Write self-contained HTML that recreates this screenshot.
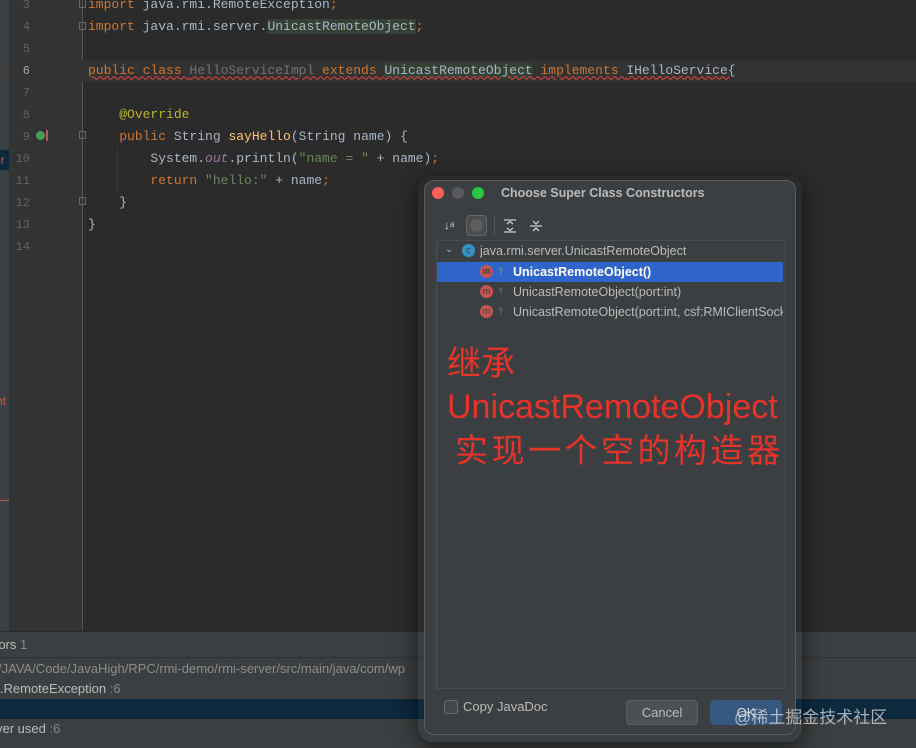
<!DOCTYPE html>
<html><head><meta charset="utf-8"><style>
*{margin:0;padding:0;box-sizing:border-box}
body{width:916px;height:748px;overflow:hidden;background:#2b2b2b;position:relative;font-family:"Liberation Sans","Noto Sans CJK SC",sans-serif}
.a{position:absolute}
.code{font-family:"Liberation Mono",monospace;font-size:13px;color:#a9b7c6;white-space:pre;line-height:22px}
.ln{font-family:"Liberation Mono",monospace;font-size:12px;color:#606366;line-height:22px;text-align:right;width:22px}
.k{color:#cc7832}.s{color:#6a8759}.an{color:#bbb529}.m{color:#ffc66d}.g{color:#72737a}.o{color:#9876aa;font-style:italic}
.hl{background:#344134}
.row{position:absolute;left:0;width:346px;height:20px;font-size:12.5px;color:#bbbbbb;line-height:20px;white-space:nowrap;overflow:hidden}
.mi{position:absolute;left:43px;top:3px;width:13px;height:13px;border-radius:50%;background:#c75450;color:#3c3f41;font-size:9px;line-height:13px;text-align:center}
.key{position:absolute;left:62px;top:5px;width:4px;height:8px;color:#888;font-size:9px;line-height:8px}
.bp{font-size:13px;color:#bbb;white-space:nowrap}
</style></head><body>
<div class="a" style="left:0;top:0;width:9px;height:631px;background:#3c3f41"></div>
<div class="a" style="left:9px;top:0;width:74px;height:631px;background:#313335"></div>
<div class="a" style="left:82px;top:0;width:1px;height:631px;background:#555"></div>
<div class="a" style="left:0;top:150px;width:9px;height:20px;background:#0d293e;color:#c75450;font-size:12px;line-height:20px;overflow:hidden"><span style="margin-left:-6px">er</span></div>
<div class="a" style="left:0;top:391px;width:9px;height:20px;color:#c75450;font-size:12px;line-height:20px;overflow:hidden"><span style="margin-left:-4px">nt</span></div>
<div class="a" style="left:0;top:500px;width:9px;height:1px;background:#c75450"></div>
<div class="a" style="left:83px;top:60px;width:833px;height:22px;background:#323232"></div>
<div class="a" style="left:9px;top:60px;width:74px;height:22px;background:#323232"></div>
<div class="a ln" style="left:8px;top:-6px">3<br>4<br>5<br><span style="color:#a4a3a3">6</span><br>7<br>8<br>9<br>10<br>11<br>12<br>13<br>14</div>
<div class="a" style="left:36px;top:131px;width:9px;height:9px;border-radius:50%;background:#499c54"></div>
<div class="a" style="left:46px;top:130px;width:2px;height:11px;background:#c75450"></div>
<div class="a" style="left:79px;top:0;width:7px;height:8px;border:1px solid #666;border-top:none"></div>
<div class="a" style="left:79px;top:22px;width:7px;height:8px;border:1px solid #666"></div>
<div class="a" style="left:79px;top:131px;width:7px;height:8px;border:1px solid #666"></div>
<div class="a" style="left:79px;top:197px;width:7px;height:8px;border:1px solid #666"></div>
<div class="a" style="left:117px;top:148px;width:1px;height:44px;background:#3b3b3b"></div>
<div class="a code" style="left:88px;top:-6px"><span class="k">import</span> java.rmi.RemoteException<span class="k">;</span>
<span class="k">import</span> java.rmi.server.<span class="hl">UnicastRemoteObject</span><span class="k">;</span>

<span class="k" style="text-decoration:underline wavy #bc3f3c">public class </span><span class="g" style="text-decoration:underline wavy #bc3f3c">HelloServiceImpl </span><span class="k" style="text-decoration:underline wavy #bc3f3c">extends </span><span class="hl" style="text-decoration:underline wavy #bc3f3c">UnicastRemoteObject</span><span class="k" style="text-decoration:underline wavy #bc3f3c"> implements </span><span style="text-decoration:underline wavy #bc3f3c">IHelloService{</span>

    <span class="an">@Override</span>
    <span class="k">public</span> String <span class="m">sayHello</span>(String name) {
        System.<span class="o">out</span>.println(<span class="s">"name = "</span> + name)<span class="k">;</span>
        <span class="k">return</span> <span class="s">"hello:"</span> + name<span class="k">;</span>
    }
}
</div>
<div class="a" style="left:0;top:631px;width:916px;height:117px;background:#3c3f41"></div>
<div class="a" style="left:0;top:631px;width:916px;height:1px;background:#2b2b2b"></div>
<div class="a bp" style="left:-6px;top:637px">rors <span style="color:#888">1</span></div>
<div class="a" style="left:0;top:657px;width:916px;height:1px;background:#323232"></div>
<div class="a bp" style="left:-2px;top:661px;color:#8c8c8c">/JAVA/Code/JavaHigh/RPC/rmi-demo/rmi-server/src/main/java/com/wp</div>
<div class="a bp" style="left:-3px;top:681px">i.RemoteException <span style="color:#888">:6</span></div>
<div class="a" style="left:0;top:699px;width:916px;height:20px;background:#0d293e"></div>
<div class="a bp" style="left:-4px;top:721px">ver used <span style="color:#888">:6</span></div>
<div class="a" style="left:418px;top:176px;width:384px;height:566px;border-radius:14px;box-shadow:0 6px 24px rgba(0,0,0,.6)"></div>
<div class="a" style="left:424px;top:180px;width:372px;height:555px;background:#3c3f41;border-radius:10px;border:1px solid #5a5c5e">
 <div class="a" style="left:7px;top:6px;width:12px;height:12px;border-radius:50%;background:#fe5f57"></div>
 <div class="a" style="left:27px;top:6px;width:12px;height:12px;border-radius:50%;background:#59595b"></div>
 <div class="a" style="left:47px;top:6px;width:12px;height:12px;border-radius:50%;background:#28c840"></div>
 <div class="a" style="left:76px;top:5px;font-size:12.5px;font-weight:bold;color:#bbbbbb">Choose Super Class Constructors</div>
 <div class="a" style="left:19px;top:37px;font-size:12px;color:#ccc;line-height:14px">↓<span style="font-size:8px;vertical-align:top">a</span></div>
 <div class="a" style="left:41px;top:34px;width:21px;height:21px;border:1px solid #666;border-radius:4px;background:#4a4c4e"><div style="margin:3px;width:13px;height:13px;border-radius:50%;background:#5c5e60"></div></div>
 <div class="a" style="left:69px;top:34px;width:1px;height:20px;background:#555"></div>
 <svg class="a" style="left:78px;top:38px" width="14" height="14" viewBox="0 0 14 14" stroke="#ccc" stroke-width="1.3" fill="none"><path d="M1 1H13M1 13H13M4 5L7 2.5L10 5M4 9L7 11.5L10 9"/></svg>
 <svg class="a" style="left:104px;top:38px" width="14" height="14" viewBox="0 0 14 14" stroke="#ccc" stroke-width="1.3" fill="none"><path d="M1 7H13M4 2L7 5L10 2M4 12L7 9L10 12"/></svg>
 <div class="a" style="left:11px;top:59px;width:350px;height:449px;border:1px solid #4b4d4f;background:#3c3f41;overflow:hidden">
  <div class="row" style="top:0">
   <span class="a" style="left:8px;top:-1px;color:#aaa;font-size:10px">⌄</span>
   <span class="a" style="left:25px;top:3px;width:13px;height:13px;border-radius:50%;background:#3592c4;color:#3c3f41;font-size:9px;line-height:13px;text-align:center">c</span>
   <span class="a" style="left:43px;top:0">java.rmi.server.UnicastRemoteObject</span></div>
  <div class="row" style="top:21px;background:#2f65ca;color:#fff;font-weight:bold"><span class="mi">m</span><span class="key">⫯</span><span class="a" style="left:76px;top:0">UnicastRemoteObject()</span></div>
  <div class="row" style="top:41px"><span class="mi">m</span><span class="key">⫯</span><span class="a" style="left:76px;top:0">UnicastRemoteObject(port:int)</span></div>
  <div class="row" style="top:61px"><span class="mi">m</span><span class="key">⫯</span><span class="a" style="left:76px;top:0">UnicastRemoteObject(port:int, csf:RMIClientSocketFactory)</span></div>
  <div class="a" style="left:10px;top:102px;color:#e8332a;font-size:34px;line-height:43px;white-space:nowrap">继承<br>UnicastRemoteObject<br><span style="margin-left:8px;letter-spacing:3.5px;font-size:33px">实现一个空的构造器</span></div>
 </div>
 <div class="a" style="left:19px;top:519px;width:14px;height:14px;border:1px solid #6b6b6b;border-radius:3px;background:#45484a"></div>
 <div class="a" style="left:38px;top:518px;font-size:13px;color:#bbb">Copy JavaDoc</div>
 <div class="a" style="left:201px;top:519px;width:72px;height:25px;border:1px solid #5e6060;border-radius:4px;background:#4c5052;color:#bbb;font-size:13px;text-align:center;line-height:23px">Cancel</div>
 <div class="a" style="left:285px;top:519px;width:72px;height:25px;border-radius:4px;background:#365880;color:#ddd;font-size:13px;text-align:center;line-height:25px">OK</div>
</div>
<div class="a" style="left:734px;top:703px;font-size:17px;color:rgba(220,220,220,.75);white-space:nowrap">@稀土掘金技术社区</div>
</body></html>
